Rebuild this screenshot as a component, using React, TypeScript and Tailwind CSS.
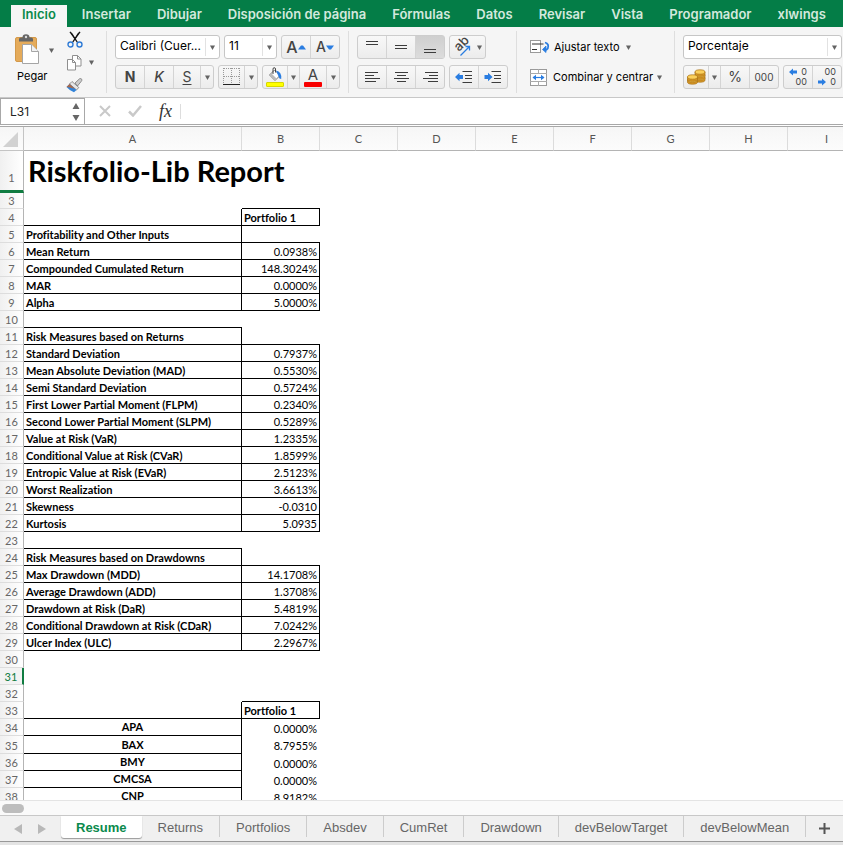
import React from "react";

const menuTabs = [
  "Insertar",
  "Dibujar",
  "Disposición de página",
  "Fórmulas",
  "Datos",
  "Revisar",
  "Vista",
  "Programador",
  "xlwings",
];

const sheetTabs = [
  "Returns",
  "Portfolios",
  "Absdev",
  "CumRet",
  "Drawdown",
  "devBelowTarget",
  "devBelowMean",
];

const columns = ["B", "C", "D", "E", "F", "G", "H", "I"];

type Row = {
  n: number;
  a?: string;
  b?: string;
  lineA?: boolean;
  lineB?: boolean;
  sideA?: boolean;
  sideB?: boolean;
  kind?: "title" | "head" | "asset";
  h?: string;
};

const section = (n: number, a: string): Row => ({ n, a, lineA: true, lineB: true, sideA: true });
const measure = (n: number, a: string, b: string): Row => ({
  n, a, b, lineA: true, lineB: true, sideA: true, sideB: true,
});
const asset = (n: number, a: string, b: string, h?: string): Row => ({
  n, a, b, lineA: true, sideA: true, kind: "asset", h,
});
const header = (n: number): Row => ({
  n, b: "Portfolio 1", lineA: true, lineB: true, sideA: true, sideB: true, kind: "head",
});

const rows: Row[] = [
  { n: 1, a: "Riskfolio-Lib Report", kind: "title", h: "h-[42px]" },
  { n: 3, lineB: true, h: "h-4" },
  header(4),
  section(5, "Profitability and Other Inputs"),
  measure(6, "Mean Return", "0.0938%"),
  measure(7, "Compounded Cumulated Return", "148.3024%"),
  measure(8, "MAR", "0.0000%"),
  measure(9, "Alpha", "5.0000%"),
  { n: 10, lineA: true },
  section(11, "Risk Measures based on Returns"),
  measure(12, "Standard Deviation", "0.7937%"),
  measure(13, "Mean Absolute Deviation (MAD)", "0.5530%"),
  measure(14, "Semi Standard Deviation", "0.5724%"),
  measure(15, "First Lower Partial Moment (FLPM)", "0.2340%"),
  measure(16, "Second Lower Partial Moment (SLPM)", "0.5289%"),
  measure(17, "Value at Risk (VaR)", "1.2335%"),
  measure(18, "Conditional Value at Risk (CVaR)", "1.8599%"),
  measure(19, "Entropic Value at Risk (EVaR)", "2.5123%"),
  measure(20, "Worst Realization", "3.6613%"),
  measure(21, "Skewness", "-0.0310"),
  measure(22, "Kurtosis", "5.0935"),
  { n: 23, lineA: true },
  section(24, "Risk Measures based on Drawdowns"),
  measure(25, "Max Drawdown (MDD)", "14.1708%"),
  measure(26, "Average Drawdown (ADD)", "1.3708%"),
  measure(27, "Drawdown at Risk (DaR)", "5.4819%"),
  measure(28, "Conditional Drawdown at Risk (CDaR)", "7.0242%"),
  measure(29, "Ulcer Index (ULC)", "2.2967%"),
  { n: 30 },
  { n: 31 },
  { n: 32, lineB: true },
  header(33),
  asset(34, "APA", "0.0000%"),
  asset(35, "BAX", "8.7955%", "h-[18px]"),
  asset(36, "BMY", "0.0000%"),
  asset(37, "CMCSA", "0.0000%"),
  asset(38, "CNP", "8.9182%"),
];

function Caret() {
  return (
    <svg width="5" height="5" viewBox="0 0 5 5" className="shrink-0" aria-hidden="true">
      <path d="M0 .5h5L2.5 5z" fill="#636363" />
    </svg>
  );
}

function MenuArrow({ label, className = "w-3" }: { label: string; className?: string }) {
  return (
    <button aria-label={label} className={`flex h-full shrink-0 items-center justify-center ${className}`}>
      <Caret />
    </button>
  );
}

function Group({ children }: { children: React.ReactNode }) {
  return (
    <div className="flex h-6 items-stretch divide-x divide-[#d4d4d4] rounded-[3px] border border-[#cdcdcd] bg-linear-to-b from-[#f8f8f8] to-[#ececec]">
      {children}
    </div>
  );
}

function Tool({ label, className = "w-[29px]", children }: { label: string; className?: string; children: React.ReactNode }) {
  return (
    <button aria-label={label} className={`flex shrink-0 items-center justify-center text-[#444] ${className}`}>
      {children}
    </button>
  );
}

function Combo({ label, value, className }: { label: string; value: string; className: string }) {
  return (
    <div className={`relative flex h-6 items-center rounded-[3px] border border-[#c6c6c6] bg-white ${className}`}>
      <select aria-label={label} className="h-full w-full appearance-none bg-transparent pb-0.5 pl-1 text-xs text-black outline-none">
        <option>{value}</option>
      </select>
      <span className="pointer-events-none absolute inset-y-0.5 right-0 flex w-[14px] items-center justify-center border-l border-[#e2e2e2]">
        <Caret />
      </span>
    </div>
  );
}

/** Horizontal strokes, each given as [x1, x2, y]. */
function Lines({ strokes, w = 17, h = 14 }: { strokes: number[][]; w?: number; h?: number }) {
  return (
    <svg width={w} height={h} viewBox={`0 0 ${w} ${h}`} stroke="#3c3c3c" aria-hidden="true">
      {strokes.map(([x1, x2, y]) => (
        <path key={y} d={`M${x1} ${y}H${x2}`} />
      ))}
    </svg>
  );
}

function Divider() {
  return <div className="h-[62px] w-px shrink-0 bg-[#dedede]" />;
}

function ClipboardIcon() {
  return (
    <svg width="24" height="30" viewBox="0 0 24 30" aria-hidden="true">
      <rect x=".5" y="3.5" width="21" height="24" rx="1.5" fill="#e5ab5a" stroke="#d3994a" />
      <path d="M4 7.500V5q0-1.500 2-1.500h1.500a3.500 3.200 0 0 1 7 0H16q2 0 2 1.500v2.500z" fill="#666" />
      <circle cx="11" cy="3" r="1.200" fill="#ddd" />
      <path d="M7.500 10.500h9l7 7V29.500h-16z" fill="#fff" stroke="#a5a5a5" />
      <path d="M16.500 10.500v7h7" fill="#f2f2f2" stroke="#a5a5a5" />
    </svg>
  );
}

function ScissorsIcon() {
  return (
    <svg width="16" height="17" viewBox="0 0 16 17" fill="none" aria-hidden="true">
      <path d="M3 1 5 3 10.500 11.500zM13 1 11 3 5.500 11.500z" fill="#111" stroke="#111" strokeWidth="1.200" />
      <circle cx="3.500" cy="13.500" r="2.500" fill="#f6f6f6" stroke="#2f7bd6" strokeWidth="1.400" />
      <circle cx="12.500" cy="13.500" r="2.500" fill="#f6f6f6" stroke="#2f7bd6" strokeWidth="1.400" />
    </svg>
  );
}

function CopyIcon() {
  return (
    <svg width="15" height="16" viewBox="0 0 15 16" fill="#fff" stroke="#8f8f8f" aria-hidden="true">
      <path d="M5.500.5h5l3.500 3.500v7H5.500z" />
      <path d="M10.500.5V4H14" fill="none" />
      <path d="M.5 4.500h5L8.500 7.500v7.500h-8z" />
      <path d="M5.500 4.500v3h3" fill="none" />
    </svg>
  );
}

function BrushIcon() {
  return (
    <svg width="17" height="15" viewBox="0 0 17 15" aria-hidden="true">
      <path d="M9 5 13.500.8q1.500-.8 2.300.5.400 1-.5 2L11.500 8z" fill="#ccc" stroke="#777" strokeWidth=".8" />
      <path d="M6 3.500 12.800 9.500 10.500 12 3.500 6z" fill="#e6e6e6" stroke="#777" strokeWidth=".8" />
      <path d="M3.500 6 10.500 12 8 14.300Q4 13 .5 9z" fill="#3283d8" />
      <path d="M3.500 6 9 10.800 4 9.500.5 9z" fill="#a8694a" />
    </svg>
  );
}

function GrowIcon({ up }: { up: boolean }) {
  return (
    <span className="flex items-center">
      <span className={up ? "text-base font-medium" : "text-sm font-medium"}>A</span>
      <svg width="8" height="5" viewBox="0 0 8 5" aria-hidden="true">
        <path d={up ? "M0 4.500h8L5 .5H3z" : "M0 .5h8L5 4.500H3z"} fill="#2a7de1" />
      </svg>
    </span>
  );
}

function BordersIcon() {
  return (
    <svg width="18" height="18" viewBox="0 0 18 18" fill="none" aria-hidden="true">
      <path d="M1 .5h16M1 8.500h16M.5 0v16M8.500 0v16M16.500 0v16" stroke="#9a9a9a" strokeDasharray="1 1" />
      <path d="M0 16.500h17" stroke="#222" />
    </svg>
  );
}

function FillIcon() {
  return (
    <svg width="18" height="20" viewBox="0 0 18 20" aria-hidden="true">
      <path d="M8.500 3 14 8.500 9 13.500 3.500 8z" fill="#fff" stroke="#777" />
      <path d="M5.500 6.500 11 12 9 13.800 3.500 8.200z" fill="#bbb" />
      <path d="M7 7V2.200q0-1.500 1.200-1.500T9.500 2v3.500" fill="none" stroke="#444" />
      <path d="M10 3.500q6 1 5.200 8.500-2.200 0-2.500-2.200z" fill="#2a7de1" />
      <rect x=".5" y="15.500" width="17" height="4" rx=".5" fill="#ff0" stroke="#d7d700" />
    </svg>
  );
}

function FontColorIcon() {
  return (
    <span className="flex flex-col items-center">
      <span className="h-[15px] text-[15px] leading-[15px]">A</span>
      <span className="h-[5px] w-[18px] rounded-[1px] bg-[#f80000]" />
    </span>
  );
}

function OrientationIcon() {
  return (
    <svg width="18" height="20" viewBox="0 0 18 20" className="overflow-visible" aria-hidden="true">
      <text x="6" y="15" transform="rotate(-45 6 15)" fontSize="13" fontWeight="500" fill="#444">ab</text>
      <path d="M7.500 18.500 16 10M16.500 13.500V9.500H12.500" fill="none" stroke="#2a7de1" strokeWidth="1.300" />
    </svg>
  );
}

function IndentIcon({ left }: { left: boolean }) {
  return (
    <svg width="18" height="14" viewBox="0 0 18 14" aria-hidden="true">
      <path d={left ? "M0 7 4.500 2.800V5H8v4H4.500v2.200z" : "M8.500 7 4 2.800V5H.5v4H4v2.200z"} fill="#2a7de1" />
      <path d="M7.500 1.500H17M10 5.500h7M10 8.500h7M7.500 12.500H17" stroke="#3c3c3c" />
    </svg>
  );
}

function WrapIcon() {
  return (
    <svg width="20" height="14" viewBox="0 0 20 14" fill="none" aria-hidden="true">
      <rect x=".5" y=".5" width="10" height="12" fill="#fff" stroke="#9a9a9a" />
      <path d="M2 4H13.500M2 9.500h5" stroke="#333" />
      <path d="M15 2.500q4.500 1.500 2.800 6-1 1.500-3 1.500" stroke="#2a7de1" strokeWidth="1.800" />
      <path d="M12.500 9.500 16 6v6.500z" fill="#2a7de1" stroke="#2a7de1" strokeWidth=".8" />
    </svg>
  );
}

function MergeIcon() {
  return (
    <svg width="17" height="17" viewBox="0 0 17 17" fill="none" aria-hidden="true">
      <rect x=".5" y=".5" width="16" height="16" fill="#fff" stroke="#9a9a9a" />
      <path d="M0 4.500h17M0 12.500h17M8.500 0v4.500M8.500 12.500V17" stroke="#aaa" />
      <path d="M3 8.500h11" stroke="#2a7de1" strokeWidth="1.200" />
      <path d="M2.500 8.500 6 5.800v5.400zM14.500 8.500 11 5.800v5.400z" fill="#2a7de1" />
    </svg>
  );
}

function CoinsIcon() {
  const coin = (cx: number, cy: number) => (
    <g key={`${cx}-${cy}`} stroke="#a87016" strokeWidth=".7">
      <path d={`M${cx - 5} ${cy}v2a5 2.200 0 0 0 10 0v-2z`} fill="#d99a26" />
      <ellipse cx={cx} cy={cy} rx="5" ry="2.200" fill="#fbd05c" />
    </g>
  );
  return (
    <svg width="19" height="16" viewBox="0 0 19 16" aria-hidden="true">
      {[coin(13, 9), coin(13, 6), coin(13, 3), coin(5.5, 11), coin(5.5, 8)]}
    </svg>
  );
}

function DecimalIcon({ more }: { more: boolean }) {
  return (
    <span className="flex flex-col text-[9px] leading-[10px]">
      <span className="flex items-center justify-end gap-1">
        {more && <DecimalArrow left />}
        {more ? "0" : "00"}
      </span>
      <span className="flex items-center justify-end gap-1">
        {!more && <DecimalArrow left={false} />}
        {more ? "00" : "0"}
      </span>
    </span>
  );
}

function DecimalArrow({ left }: { left: boolean }) {
  return (
    <svg width="8" height="8" viewBox="0 0 8 8" aria-hidden="true">
      <path d={left ? "M0 4 4 .5v2h4v3H4v2z" : "M8 4 4 .5v2H0v3h4v2z"} fill="#2a7de1" />
    </svg>
  );
}

function Ribbon() {
  return (
    <div className="flex h-[71px] shrink-0 items-start overflow-hidden border-b border-[#c8c8c8] bg-[#f5f5f5] pt-1">
      <div className="flex h-[62px] w-[106px] shrink-0">
        <div className="flex w-[62px] items-start pt-[3px] pl-[15px]">
          <button className="flex w-8 flex-col items-start gap-1 text-[11px] leading-4 text-black">
            <ClipboardIcon />
            <span className="pl-0.5">Pegar</span>
          </button>
          <div className="h-8">
            <MenuArrow label="Opciones de pegado" className="w-2" />
          </div>
        </div>
        <div className="flex flex-col items-center justify-between pl-1">
          <button aria-label="Cortar"><ScissorsIcon /></button>
          <button aria-label="Copiar"><CopyIcon /></button>
          <button aria-label="Copiar formato"><BrushIcon /></button>
        </div>
        <div className="ml-0.5 h-[62px]">
          <MenuArrow label="Opciones de copia" />
        </div>
      </div>
      <Divider />

      <div className="flex w-[241px] shrink-0 flex-col gap-1.5 pt-1 pl-2">
        <div className="flex gap-1">
          <Combo label="Fuente" value="Calibri (Cuer..." className="w-[105px]" />
          <Combo label="Tamaño de fuente" value="11" className="w-[53px]" />
          <Group>
            <Tool label="Aumentar tamaño"><GrowIcon up /></Tool>
            <Tool label="Disminuir tamaño" className="w-7"><GrowIcon up={false} /></Tool>
          </Group>
        </div>
        <div className="flex gap-1">
          <Group>
            <Tool label="Negrita"><b className="text-sm">N</b></Tool>
            <Tool label="Cursiva"><i className="text-sm font-medium">K</i></Tool>
            <Tool label="Subrayado" className="w-[27px]"><u className="text-sm underline-offset-2">S</u></Tool>
            <MenuArrow label="Opciones de subrayado" />
          </Group>
          <Group>
            <Tool label="Bordes" className="w-[26px]"><BordersIcon /></Tool>
            <MenuArrow label="Opciones de borde" />
          </Group>
          <Group>
            <Tool label="Color de relleno" className="w-[25px]"><FillIcon /></Tool>
            <MenuArrow label="Opciones de relleno" />
            <Tool label="Color de fuente" className="w-[27px]"><FontColorIcon /></Tool>
            <MenuArrow label="Opciones de color" />
          </Group>
        </div>
      </div>
      <Divider />

      <div className="flex w-[167px] shrink-0 flex-col gap-1.5 pt-1 pl-2">
        <div className="flex gap-1">
          <Group>
            <Tool label="Alinear arriba"><Lines strokes={[[2, 14, 1.5], [2, 14, 4.5]]} /></Tool>
            <Tool label="Alinear al medio"><Lines strokes={[[2, 14, 5.5], [2, 14, 8.5]]} /></Tool>
            <button aria-label="Alinear abajo" aria-pressed="true" className="flex w-7 items-center justify-center bg-linear-to-b from-[#cfcfcf] to-[#dcdcdc]">
              <Lines strokes={[[2, 14, 9.5], [2, 14, 12.5]]} />
            </button>
          </Group>
          <Group>
            <button aria-label="Orientación" className="flex w-[35px] items-center justify-center gap-1.5">
              <OrientationIcon />
              <Caret />
            </button>
          </Group>
        </div>
        <div className="flex gap-1">
          <Group>
            <Tool label="Alinear a la izquierda"><Lines strokes={[[1, 14, 2.5], [1, 10, 5.5], [1, 16, 8.5], [1, 12, 11.5]]} /></Tool>
            <Tool label="Centrar"><Lines strokes={[[2, 15, 2.5], [4, 13, 5.5], [1, 16, 8.5], [4, 13, 11.5]]} /></Tool>
            <Tool label="Alinear a la derecha" className="w-7"><Lines strokes={[[3, 16, 2.5], [7, 16, 5.5], [1, 16, 8.5], [6, 16, 11.5]]} /></Tool>
          </Group>
          <Group>
            <Tool label="Disminuir sangría"><IndentIcon left /></Tool>
            <Tool label="Aumentar sangría" className="w-7"><IndentIcon left={false} /></Tool>
          </Group>
        </div>
      </div>
      <Divider />

      <div className="flex w-[157px] shrink-0 flex-col gap-1.5 pt-1 pl-[13px] text-[11px] text-black">
        <button className="flex h-6 items-center whitespace-nowrap">
          <WrapIcon />
          <span className="mr-1.5 ml-1">Ajustar texto</span>
          <Caret />
        </button>
        <button className="flex h-6 items-center whitespace-nowrap">
          <MergeIcon />
          <span className="mr-1 ml-1.5">Combinar y centrar</span>
          <Caret />
        </button>
      </div>
      <Divider />

      <div className="flex shrink-0 flex-col gap-1.5 pt-1 pl-2">
        <Combo label="Formato de número" value="Porcentaje" className="w-[159px]" />
        <div className="flex gap-1">
          <Group>
            <Tool label="Moneda" className="w-[25px]"><CoinsIcon /></Tool>
            <MenuArrow label="Opciones de moneda" />
            <Tool label="Porcentaje"><span className="text-sm">%</span></Tool>
            <Tool label="Separador de miles" className="w-7"><span className="text-[10px]">000</span></Tool>
          </Group>
          <Group>
            <Tool label="Aumentar decimales"><DecimalIcon more /></Tool>
            <Tool label="Disminuir decimales" className="w-7"><DecimalIcon more={false} /></Tool>
          </Group>
        </div>
      </div>
    </div>
  );
}

function FormulaBar() {
  return (
    <div className="flex h-[27px] shrink-0 items-stretch border-b border-[#a8a8a8] bg-white">
      <div className="flex w-[85px] items-center border-x border-t border-[#a8a8a8]">
        <input aria-label="Cuadro de nombres" defaultValue="L31" className="w-full min-w-0 bg-transparent pl-[9px] text-xs text-[#222] outline-none" />
        <svg width="8" height="18" viewBox="0 0 8 18" className="mr-1 shrink-0" aria-hidden="true">
          <path d="M.5 6 4 0 7.500 6zM.5 12h7L4 18z" fill="#666" />
        </svg>
      </div>
      <div className="flex items-center pl-[14px] text-[#c9c9c9]">
        <button aria-label="Cancelar">
          <svg width="12" height="12" viewBox="0 0 12 12" stroke="currentColor" strokeWidth="2" aria-hidden="true">
            <path d="M1 1l10 10M11 1 1 11" />
          </svg>
        </button>
        <button aria-label="Introducir" className="ml-[17px]">
          <svg width="14" height="12" viewBox="0 0 14 12" fill="none" stroke="currentColor" strokeWidth="2.500" aria-hidden="true">
            <path d="M1 6.500 5 10.500 13 1" />
          </svg>
        </button>
        <button aria-label="Insertar función" className="ml-[17px] font-['Liberation_Serif',serif] text-lg leading-5 text-[#333] italic">fx</button>
        <span className="ml-2 h-[15px] w-px bg-[#ddd]" />
      </div>
      <input aria-label="Barra de fórmulas" className="min-w-0 flex-1 bg-transparent px-2 text-xs outline-none" />
    </div>
  );
}

function SheetRow({ row }: { row: Row }) {
  const active = row.n === 31;
  const title = row.kind === "title";
  return (
    <tr className={row.h ?? "h-[17px]"}>
      <th
        scope="row"
        className={`border-r px-0 pb-0 text-center text-[11px] leading-[15px] font-normal ${
          title
            ? "border-b-[3px] border-r-[#b4b4b4] border-b-[#107c41] bg-linear-to-r from-[#f0f0f0] to-white pt-3.5 text-[#666]"
            : active
              ? "border-r-2 border-b border-r-[#107c41] border-b-[#ddd] bg-[#f3f3f3] pt-px font-medium text-[#107c41]"
              : `border-b border-r-[#b4b4b4] border-b-[#ddd] bg-linear-to-r from-[#f0f0f0] to-white text-[#666] ${row.n === 3 ? "pt-0" : "pt-px"}`
        }`}
      >
        {row.n}
      </th>
      <td
        className={`overflow-visible px-0 font-bold whitespace-nowrap ${
          title ? "pt-0 pb-[3px] text-[29px] leading-8" : "text-[11px]"
        } ${
          row.kind === "asset" ? "pt-px pb-px text-center leading-[14px]" : title ? "" : "pt-px pb-0 leading-[15px]"
        } ${row.lineA ? "border-b border-b-black" : ""} ${row.sideA ? "border-r border-r-black" : ""}`}
      >
        {row.a && <div className={title ? "pl-1" : row.kind === "asset" ? "" : "pl-0.5"}>{row.a}</div>}
      </td>
      <td
        className={`pb-0 text-[11px] leading-[15px] whitespace-nowrap ${row.n === 3 ? "pt-0" : "pt-px"} ${
          row.kind === "head" ? "pr-0 pl-0.5 text-left font-bold" : "pl-0 text-right"
        } ${row.lineB ? "border-b border-b-black" : ""} ${
          row.sideB ? "border-r border-r-black pr-0.5" : "pr-[3px]"
        }`}
      >
        {row.b}
      </td>
      <td colSpan={7} className="p-0" />
    </tr>
  );
}

function Sheet() {
  return (
    <main className="mt-px min-h-0 flex-1 overflow-hidden border-t border-[#a8a8a8] bg-white font-[Lato,sans-serif] text-black [font-variant-ligatures:none]">
      <table className="w-[866px] table-fixed border-separate border-spacing-0">
        <colgroup>
          <col className="w-6" />
          <col className="w-[218px]" />
          {columns.map((c) => (
            <col key={c} className="w-[78px]" />
          ))}
        </colgroup>
        <thead>
          <tr className="h-6 bg-linear-to-b from-[#f6f6f6] to-[#fcfcfc] text-[11px] text-[#555]">
            <td className="border-r border-b border-[#c4c4c4] p-0">
              <svg width="20" height="20" viewBox="0 0 20 20" aria-hidden="true">
                <path d="M18 3v15H3z" fill="#d2d2d2" />
              </svg>
            </td>
            {["A", ...columns].map((c) => (
              <th key={c} scope="col" className="border-r border-b border-r-[#dcdcdc] border-b-[#b4b4b4] px-0 pt-0.5 pb-0 font-normal">
                {c}
              </th>
            ))}
          </tr>
        </thead>
        <tbody>
          {rows.map((row) => (
            <SheetRow key={row.n} row={row} />
          ))}
        </tbody>
      </table>
    </main>
  );
}

function SheetTabs() {
  return (
    <footer className="shrink-0 overflow-hidden bg-[#e4e4e4] pb-[3px]">
      <div className="flex h-[15px] items-center border-t border-[#e4e4e4] bg-[#fafafa] pl-0.5">
        <div className="h-[9px] w-[22px] rounded-full bg-[#bdbdbd]" />
      </div>
      <nav className="flex h-[27px] items-start border-t border-b border-t-[#c8c8c8] border-b-[#999] bg-[#f0f0f0] font-['Liberation_Sans',sans-serif] text-[13px] text-[#666]">
        <div className="flex h-[25px] w-[61px] shrink-0 items-center gap-4 pl-[14px]">
          <button aria-label="Hoja anterior">
            <svg width="8" height="10" viewBox="0 0 8 10" aria-hidden="true"><path d="M8 0v10L0 5z" fill="#b8b8b8" /></svg>
          </button>
          <button aria-label="Hoja siguiente">
            <svg width="8" height="10" viewBox="0 0 8 10" aria-hidden="true"><path d="M0 0v10l8-5z" fill="#b8b8b8" /></svg>
          </button>
        </div>
        <button className="h-[22px] shrink-0 rounded-b-[3px] bg-white px-[15px] pt-0.5 font-bold text-[#0a8a4c] shadow-[0_1px_1px_#999]">Resume</button>
        {sheetTabs.map((t) => (
          <button key={t} className="h-[21px] shrink-0 border-r border-[#ccc] px-4 pt-0.5">{t}</button>
        ))}
        <button aria-label="Hoja nueva" className="flex h-[25px] flex-1 items-center justify-center">
          <svg width="11" height="11" viewBox="0 0 11 11" stroke="#555" strokeWidth="2" aria-hidden="true">
            <path d="M5.500 0v11M0 5.500h11" />
          </svg>
        </button>
      </nav>
    </footer>
  );
}

export default function App() {
  return (
    <div className="flex h-screen flex-col overflow-hidden bg-white font-[Inter,sans-serif]">
      <nav className="flex h-[27px] shrink-0 items-end overflow-hidden bg-[#047d47] pl-[11px] text-[13px] font-semibold text-[#d3e9dd]">
        <button className="mr-0.5 h-[22px] shrink-0 bg-[#f6f6f6] px-[11px] pb-0.5 text-[#0a8a4c]">Inicio</button>
        {menuTabs.map((t) => (
          <button key={t} className="h-[22px] shrink-0 px-[13px] pb-0.5 whitespace-nowrap">{t}</button>
        ))}
      </nav>
      <Ribbon />
      <FormulaBar />
      <Sheet />
      <SheetTabs />
    </div>
  );
}
